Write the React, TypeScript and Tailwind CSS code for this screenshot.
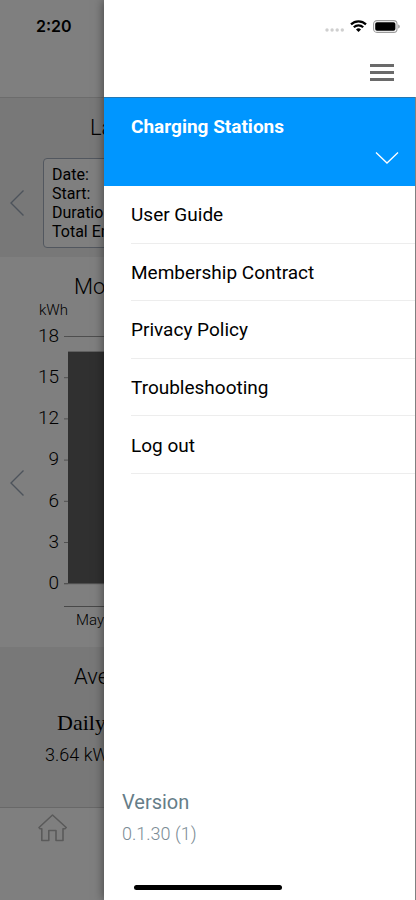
import { useState } from 'react'

const menuItems = ['User Guide', 'Membership Contract', 'Privacy Policy', 'Troubleshooting', 'Log out']

const sessionLines = ['Date:', 'Start:', 'Duratio', 'Total En']

const yTicks = [18, 15, 12, 9, 6, 3, 0]

const TICK_GAP = 41.2
const barValue = 16.9

function PreviousButton({ label }: { label: string }) {
  return (
    <button type="button" aria-label={label} className="flex w-[34px] shrink-0 items-center justify-center">
      <svg width="14" height="26" viewBox="0 0 14 26" fill="none" stroke="#9aa6b6" strokeWidth="1.4">
        <path d="M13.5 0.5 1 13l12.5 12.5" />
      </svg>
    </button>
  )
}

function UsageChart() {
  const baseline = 10.5 + TICK_GAP * 6
  const barHeight = (barValue / 3) * TICK_GAP

  return (
    <div className="flex-1">
      <p className="pl-[5px] text-[15px] leading-4 font-light">kWh</p>
      <div className="mt-2 flex gap-[5px]">
        <div className="flex h-[267px] w-[25px] flex-col justify-between text-right text-[19px] leading-5 font-light">
          {yTicks.map((tick) => (
            <span key={tick}>{tick}</span>
          ))}
        </div>
        <div className="flex-1">
          <svg width="100%" height="282" aria-hidden="true">
            <line x1="0" x2="100%" y1="10.5" y2="10.5" stroke="#9c9c9c" />
            {yTicks.map((tick, i) => (
              <line key={tick} x1="0" x2="4" y1={10.5 + i * TICK_GAP} y2={10.5 + i * TICK_GAP} stroke="#a0a0a0" />
            ))}
            <rect x="4" y={baseline - barHeight} width="20%" height={barHeight} fill="#606060" />
            <line x1="0" x2="100%" y1={baseline} y2={baseline} stroke="#a0a0a0" />
            <line x1="0" x2="100%" y1="280.5" y2="280.5" stroke="#909090" />
          </svg>
          <p className="pt-[2px] pb-[17px] pl-3 text-[15px] leading-5 font-light">May</p>
        </div>
      </div>
    </div>
  )
}

function Dashboard() {
  return (
    <main className="flex min-h-screen flex-col bg-white whitespace-nowrap">
      <header className="h-[98px] border-b border-[#d8d8d8] pt-4 pl-9">
        <p className="font-['Inter',sans-serif] text-[16px] leading-5 font-semibold">2:20</p>
      </header>

      <section className="bg-[#f0f0f0] pb-[9px]">
        <h2 className="py-[15px] pl-[90px] text-[22px] leading-[30px] font-light">La</h2>
        <div className="flex">
          <PreviousButton label="Previous session" />
          <div className="ml-[9px] flex-1 rounded border border-[#a4afbe] bg-white px-2 py-[6px] text-[16px] leading-[19px]">
            {sessionLines.map((line) => (
              <p key={line}>{line}</p>
            ))}
          </div>
        </div>
      </section>

      <section>
        <h2 className="pt-[15px] pl-[74px] text-[22px] leading-[30px] font-light">Mo</h2>
        <div className="flex">
          <div className="flex pt-4">
            <PreviousButton label="Previous month" />
          </div>
          <UsageChart />
        </div>
      </section>

      <section className="h-40 bg-[#f0f0f0]">
        <h2 className="pt-[15px] pl-[74px] text-[22px] leading-[30px] font-light">Ave</h2>
        <h3 className="pt-4 pl-[57px] font-['Liberation_Serif',serif] text-[22px] leading-[30px]">Daily</h3>
        <p className="pt-[2px] pl-[45px] text-[18px] leading-[30px] font-light">3.64 kW</p>
      </section>

      <footer className="flex-1 border-t border-[#d0d0d0] pt-[6px] pl-[38px]">
        <a href="#home" aria-label="Home" className="inline-block">
          <svg width="29" height="28" viewBox="0 0 29 28" fill="none" stroke="#b4b4b4" strokeWidth="1.6" strokeLinejoin="round">
            <path d="M14.5 1 1 13.5l1 1.2h1.8V26.5h7V16.5h7.2v10h7V14.7h2l1.2-1.2Z" />
          </svg>
        </a>
      </footer>
    </main>
  )
}

function StatusIcons() {
  return (
    <div className="flex h-[52px] items-center justify-end gap-[6px] pr-4">
      <svg width="20" height="12" viewBox="0 0 20 12" fill="#cfcfcf" aria-hidden="true">
        <circle cx="3" cy="10" r="1.7" />
        <circle cx="8.1" cy="10" r="1.7" />
        <circle cx="13.2" cy="10" r="1.7" />
        <circle cx="18.3" cy="10" r="1.7" />
      </svg>
      <svg width="17" height="12" viewBox="0 0 17 12" fill="none" stroke="#000" strokeWidth="2.2" aria-hidden="true">
        <path d="M1 4.4a10.8 10.8 0 0 1 15 0" />
        <path d="M3.8 7.3a6.8 6.8 0 0 1 9.4 0" />
        <path d="M8.5 12 6 9.4a3.6 3.6 0 0 1 5 0Z" fill="#000" stroke="none" />
      </svg>
      <svg width="27" height="13" viewBox="0 0 27 13" aria-hidden="true">
        <rect x="0.6" y="0.6" width="23.4" height="11.8" rx="3.4" fill="none" stroke="#9c9c9c" strokeWidth="1.1" />
        <rect x="2.2" y="2.2" width="20.2" height="8.6" rx="1.8" fill="#000" />
        <path d="M25.3 4.4v4.2c.9-.3 1.4-1.1 1.4-2.1s-.5-1.8-1.4-2.1Z" fill="#8c8c8c" />
      </svg>
    </div>
  )
}

function Drawer() {
  const [expanded, setExpanded] = useState(false)

  return (
    <aside className="absolute inset-y-0 right-0 flex w-3/4 flex-col bg-white shadow-[0_0_10px_rgba(0,0,0,0.5)]">
      <div className="h-[97px]">
        <StatusIcons />
        <div className="flex justify-end pt-3 pr-[22px]">
          <button type="button" aria-label="Close menu" className="flex w-6 flex-col gap-1">
            <span className="h-[3px] w-full bg-[#6a6a6a]" />
            <span className="h-[3px] w-full bg-[#6a6a6a]" />
            <span className="h-[3px] w-full bg-[#6a6a6a]" />
          </button>
        </div>
      </div>

      <div className="flex flex-1 flex-col border-r border-[#808080]">
        <button
          type="button"
          aria-expanded={expanded}
          onClick={() => setExpanded(!expanded)}
          className="flex h-[89px] flex-col border-t border-[#2478b4] bg-[#0096ff] pt-[17px] pr-4 pl-[27px] text-left text-white"
        >
          <span className="text-[19px] leading-6 font-bold">Charging Stations</span>
          <svg
            width="24"
            height="14"
            viewBox="0 0 24 14"
            fill="none"
            stroke="currentColor"
            strokeWidth="1.3"
            className="mt-3 self-end"
          >
            <path d="M1 1.5 12 12 23 1.5" />
          </svg>
        </button>

        <nav className="grid h-72 grid-rows-5 pl-[27px]">
          {menuItems.map((item) => (
            <a key={item} href="#menu" className="flex items-center border-b border-[#ededed] pt-[2px] text-[19px] leading-6">
              {item}
            </a>
          ))}
        </nav>

        <div className="mt-auto pb-[54px] pl-[18px]">
          <p className="text-[20px] leading-6 text-[#667d88]">Version</p>
          <p className="pt-2 text-[18px] leading-6 font-light text-[#7b8c95]">0.1.30 (1)</p>
        </div>
      </div>
    </aside>
  )
}

export default function App() {
  return (
    <div className="relative min-h-screen overflow-hidden font-['Roboto',sans-serif] text-black">
      <Dashboard />
      <div className="absolute inset-0 bg-black/50" />
      <Drawer />
      <div className="absolute bottom-[10px] left-1/2 h-[5px] w-[148px] -translate-x-1/2 rounded-full bg-black" />
    </div>
  )
}
